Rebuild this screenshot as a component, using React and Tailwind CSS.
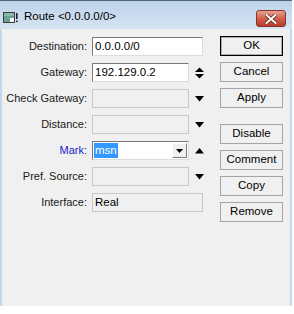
import React from "react";

const font = { fontFamily: '"Liberation Sans", Arial, sans-serif' };

function Down() {
  return (
    <svg width="9" height="6" viewBox="0 0 9 6" className="block">
      <path d="M0 0H9L4.5 5.5Z" fill="#000" />
    </svg>
  );
}
function Up() {
  return (
    <svg width="9" height="6" viewBox="0 0 9 6" className="block">
      <path d="M0 5.5H9L4.5 0Z" fill="#000" />
    </svg>
  );
}
function UpDown() {
  return (
    <svg width="9" height="12" viewBox="0 0 9 12" className="block">
      <path d="M0 5H9L4.5 0.5Z" fill="#000" />
      <path d="M0 7H9L4.5 11.5Z" fill="#000" />
    </svg>
  );
}

function Row({ label, blue, children, arrow }) {
  return (
    <div className="flex items-center h-[19px]">
      <div className={`w-[85px] text-right text-[11px] leading-none ${blue ? "text-[#1c1cc8]" : "text-[#1a1a1a]"}`}>{label}</div>
      <div className="ml-[5px] flex items-center">{children}</div>
      {arrow ? <div className="ml-[6px] w-[9px] flex justify-center">{arrow}</div> : null}
    </div>
  );
}

function WhiteInput({ w, value }) {
  return (
    <div className={`${w} h-[19px] bg-white border border-t-[#7a7a7a] border-l-[#7a7a7a] border-r-[#dcdcdc] border-b-[#dcdcdc] flex items-center pl-[2px] text-[11.5px] text-black leading-none`}>
      {value}
    </div>
  );
}

function GrayInput({ w, value }) {
  return (
    <div className={`${w} h-[19px] bg-[#f0f0f0] border border-[#c8c8c8] flex items-center pl-[2px] text-[11.5px] text-black leading-none`}>
      {value}
    </div>
  );
}

function Btn({ children, def, mt }) {
  return (
    <div className={`${mt} w-[63px] h-[20px] flex items-center justify-center text-[11.5px] text-black leading-none bg-[#f0f0f0] ${def ? "border border-black shadow-[inset_0_0_0_1px_#adadad]" : "border border-[#a5a5a5]"}`}>
      {children}
    </div>
  );
}

export default function App() {
  return (
    <div className="w-[294px] h-[314px] bg-white" style={font}>
      <div className="w-[292px] h-[306px] flex flex-col bg-[#c4d7ec] border-t border-t-[#5a6470]">
        <div className="h-[28px] flex items-center bg-gradient-to-b from-[#bcd2ea] to-[#d7e4f2] relative">
          <div className="ml-[3px] mt-[5px]">
            <svg width="16" height="12" viewBox="0 0 16 12" className="block">
              <rect x="0.5" y="0.5" width="11" height="10" fill="#6d9e94" stroke="#3b3b3b" />
              <rect x="1" y="1" width="10" height="3" fill="#8fb8ad" />
              <rect x="7" y="6" width="4" height="4" fill="#f4f4f4" />
              <rect x="13" y="1" width="1.6" height="6" fill="#222" />
              <rect x="13" y="8.5" width="1.6" height="1.6" fill="#222" />
            </svg>
          </div>
          <div className="ml-[5px] mt-[4px] text-[11.5px] text-black leading-none">Route &lt;0.0.0.0/0&gt;</div>
          <div className="absolute left-[256px] top-[9px] w-[30px] h-[17px] rounded-[3px] border border-[#8a3326] bg-gradient-to-b from-[#e8a092] via-[#d0604c] to-[#b8392a] flex items-center justify-center">
            <svg width="12" height="10" viewBox="0 0 12 10" className="block">
              <path d="M1.5 1L10.5 9M10.5 1L1.5 9" stroke="#5a2018" strokeWidth="3.4" strokeLinecap="square" />
              <path d="M1.5 1L10.5 9M10.5 1L1.5 9" stroke="#ffffff" strokeWidth="2" strokeLinecap="square" />
            </svg>
          </div>
        </div>
        <div className="flex-1 mx-[2px] bg-[#f0f0f0] flex">
          <div className="flex flex-col gap-[7px] pt-[8px]">
            <Row label="Destination:">
              <WhiteInput w="w-[111px]" value="0.0.0.0/0" />
            </Row>
            <Row label="Gateway:" arrow={<UpDown />}>
              <WhiteInput w="w-[97px]" value="192.129.0.2" />
            </Row>
            <Row label="Check Gateway:" arrow={<Down />}>
              <GrayInput w="w-[97px]" value="" />
            </Row>
            <Row label="Distance:" arrow={<Down />}>
              <GrayInput w="w-[97px]" value="" />
            </Row>
            <Row label="Mark:" blue arrow={<Up />}>
              <div className="w-[97px] h-[19px] bg-white border border-t-[#7a7a7a] border-l-[#7a7a7a] border-r-[#dcdcdc] border-b-[#dcdcdc] flex items-center">
                <span className="ml-[1px] bg-[#3399ff] text-white text-[11.5px] leading-none px-[1px] py-[2px]">msn</span>
                <div className="ml-auto mr-[1px] w-[15px] h-[15px] bg-[#f0f0f0] border border-t-[#fcfcfc] border-l-[#fcfcfc] border-r-[#7a7a7a] border-b-[#7a7a7a] flex items-center justify-center">
                  <svg width="7" height="4" viewBox="0 0 7 4" className="block">
                    <path d="M0 0H7L3.5 4Z" fill="#000" />
                  </svg>
                </div>
              </div>
            </Row>
            <Row label="Pref. Source:" arrow={<Down />}>
              <GrayInput w="w-[97px]" value="" />
            </Row>
            <Row label="Interface:">
              <GrayInput w="w-[111px]" value="Real" />
            </Row>
          </div>
          <div className="ml-[16px] flex flex-col pt-[7px]">
            <Btn def mt="">OK</Btn>
            <Btn mt="mt-[6px]">Cancel</Btn>
            <Btn mt="mt-[6px]">Apply</Btn>
            <Btn mt="mt-[16px]">Disable</Btn>
            <Btn mt="mt-[6px]">Comment</Btn>
            <Btn mt="mt-[6px]">Copy</Btn>
            <Btn mt="mt-[6px]">Remove</Btn>
          </div>
        </div>
      </div>
    </div>
  );
}
